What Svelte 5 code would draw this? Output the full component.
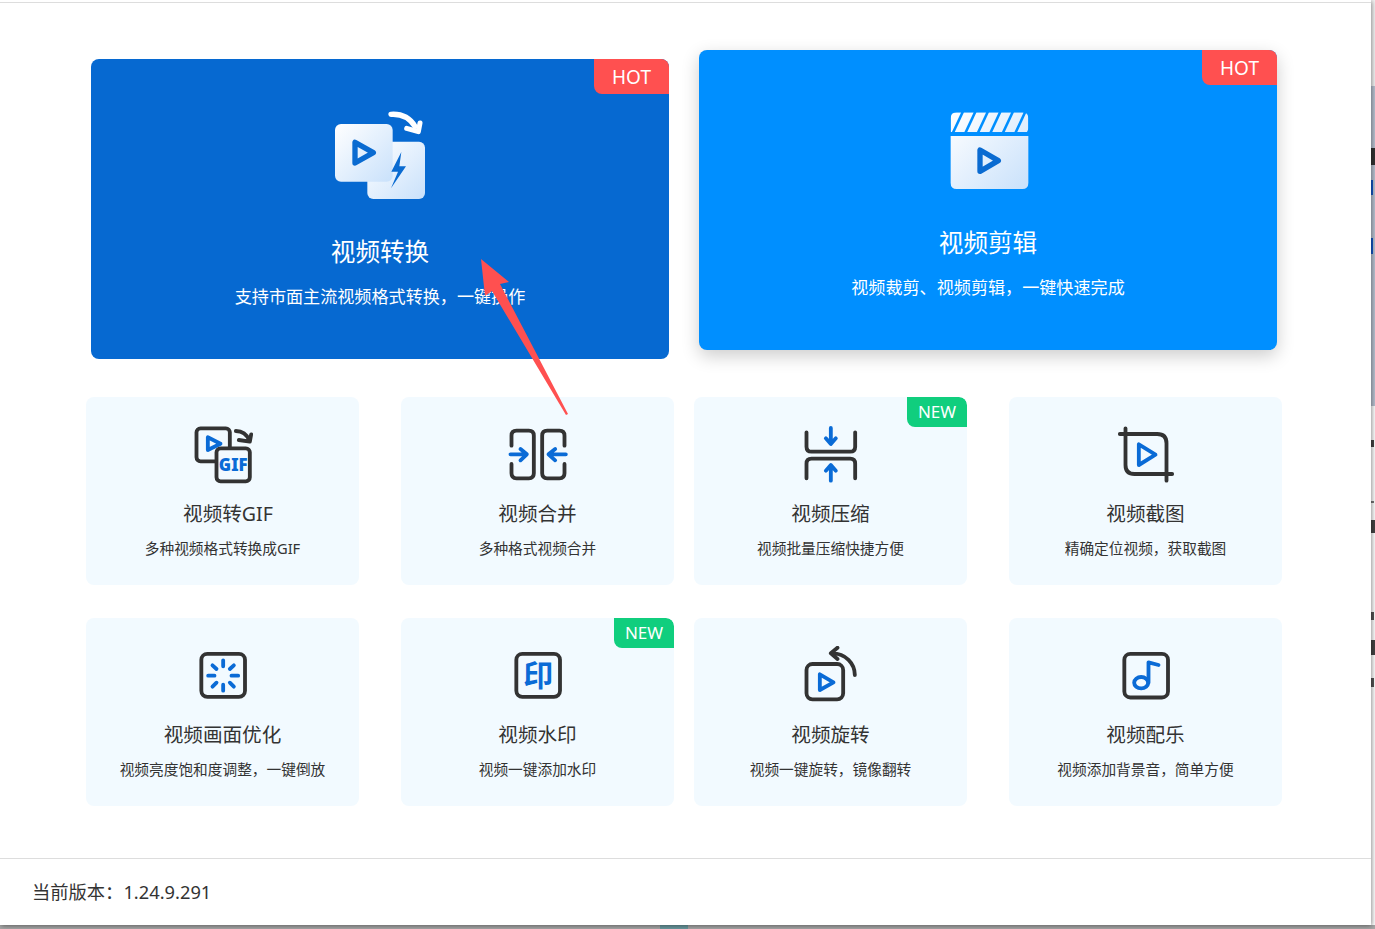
<script>
  const stripes = [-1, 0, 1, 2, 3, 4, 5].map((k) => {
    const a = 132 + 37.5 * k;
    return `${a},67 ${a + 29},67 ${a + 1},127 ${a - 28},127`;
  });

  const left = [
    { icon: 'gif', title: '视频转GIF', sub: '多种视频格式转换成GIF', shifted: true },
    { icon: 'merge', title: '视频合并', sub: '多种格式视频合并' },
    { icon: 'enhance', title: '视频画面优化', sub: '视频亮度饱和度调整，一键倒放' },
    { icon: 'mark', title: '视频水印', sub: '视频一键添加水印', tag: 'NEW' }
  ];
  const right = [
    { icon: 'compress', title: '视频压缩', sub: '视频批量压缩快捷方便', tag: 'NEW' },
    { icon: 'shot', title: '视频截图', sub: '精确定位视频，获取截图' },
    { icon: 'rotate', title: '视频旋转', sub: '视频一键旋转，镜像翻转' },
    { icon: 'music', title: '视频配乐', sub: '视频添加背景音，简单方便' }
  ];
  const boxes = {
    gif: '67.5 45 180 180',
    merge: '52.5 75 180 180',
    compress: '61.5 45 180 180',
    shot: '46.5 45 180 180',
    enhance: '37.5 33 180 180',
    mark: '37.5 33 180 180',
    rotate: '46.5 33 180 180',
    music: '46.5 33 180 180'
  };
  const marks = [
    { y: 148, h: 17, w: 4, color: '#333' },
    { y: 180, h: 15, w: 2, color: '#1657c9' },
    { y: 238, h: 16, w: 2, color: '#1657c9' },
    { y: 440, h: 7, w: 3, color: '#444' },
    { y: 501, h: 2, w: 3, color: '#777' },
    { y: 520, h: 13, w: 4, color: '#444' },
    { y: 612, h: 8, w: 3, color: '#555' },
    { y: 640, h: 15, w: 4, color: '#444' },
    { y: 678, h: 9, w: 3, color: '#555' }
  ];
</script>

{#snippet card(item)}
  <div class="card">
    {#if item.tag}<span class="tag">{item.tag}</span>{/if}
    <svg class="tool-icon" viewBox={boxes[item.icon]} aria-hidden="true">
      {#if item.icon === 'gif'}
        <rect class="ink" x="78" y="55" width="100" height="99" rx="12" />
        <path class="blue" d="M112 82v38l38-19z" />
        <rect class="ink" x="138" y="115" width="100" height="99" rx="12" fill="#f2faff" />
        <text class="gif" x="188" y="183" text-anchor="middle">GIF</text>
        <path class="ink" d="M196 63c18 0 33 10 40 28M242 73l-4 22-33-5" />
      {:else if item.icon === 'merge'}
        <path class="ink" d="M63 137v-30q0-15 15-15h37q15 0 15 15v113q0 15-15 15H78q-15 0-15-15v-28" />
        <path class="ink" d="M222 137v-30q0-15-15-15h-37q-15 0-15 15v113q0 15 15 15h37q15 0 15-15v-28" />
        <path class="blue" d="M60 163h48M90 147l19 16-19 18M226 163h-50M194 147l-20 16 20 18" />
      {:else if item.icon === 'compress'}
        <path class="ink" d="M78 67v43q0 15 15 15h116q15 0 15-15V67M78 205v-44q0-15 15-15h116q15 0 15 15v44" />
        <path class="blue" d="M151 54v46M136 85l15 17 15-17M151 212v-46M136 182l15-17 15 17" />
      {:else if item.icon === 'shot'}
        <path class="ink" d="M58 72h112q28 0 28 28v112M75 55v110q0 27 27 27h113" />
        <path class="blue" d="M115 103v62l50-31z" />
      {:else if item.icon === 'enhance'}
        <rect class="ink" x="62.5" y="56.5" width="131" height="129" rx="18" />
        <path class="blue" d="M128 76v18M128 149v18M83 122h19M153 122h20M96 91l12 11M160 91l-12 11M96 155l12-12M160 155l-12-12" />
      {:else if item.icon === 'mark'}
        <rect class="ink" x="62.5" y="56.5" width="131" height="129" rx="18" />
        <text class="seal" x="128" y="152" text-anchor="middle">印</text>
      {:else if item.icon === 'rotate'}
        <rect class="ink" x="63" y="87" width="110" height="106" rx="18" />
        <path class="blue" d="M103 118v47l41-23z" />
        <path class="ink" d="M208 120c0-35-28-65-68-65M156 38l-20 17 20 17" />
      {:else if item.icon === 'music'}
        <rect class="ink" x="71.5" y="56.5" width="131" height="131" rx="18" />
        <ellipse class="blue" cx="122" cy="143" rx="21" ry="17" />
        <path class="blue" d="M144 143V82l30 8" />
      {/if}
    </svg>
    <div class="card-title" class:shifted={item.shifted}>{item.title}</div>
    <div class="card-sub">{item.sub}</div>
  </div>
{/snippet}

<div class="page">
  <div class="window">
    <main class="main">
      <div class="columns">
        <section class="column">
          <div class="hero hero-a">
            <span class="hot">HOT</span>
            <svg class="hero-icon" viewBox="90 45 300 300" aria-hidden="true">
              <defs>
                <linearGradient id="tile" x1="0" y1="0" x2="1" y2="1">
                  <stop offset="0" stop-color="#ffffff" />
                  <stop offset="1" stop-color="#c9e1fb" />
                </linearGradient>
              </defs>
              <rect x="202" y="155" width="173" height="172" rx="18" fill="url(#tile)" />
              <rect x="105" y="102" width="173" height="173" rx="18" fill="url(#tile)" />
              <path d="M304 186l-30 59h20l-21 50 45-66h-20z" fill="#0a6bd1" />
              <path d="M165 157v62l55-31z" fill="none" stroke="#0a6bd1" stroke-width="16" stroke-linejoin="round" />
              <path d="M273 73c30-2 56 10 72 36" fill="none" stroke="#fff" stroke-width="16" stroke-linecap="round" />
              <path d="M360 99l-5 26-35-10" fill="none" stroke="#fff" stroke-width="15" stroke-linecap="round" stroke-linejoin="round" />
            </svg>
            <h2>视频转换</h2>
            <p>支持市面主流视频格式转换，一键操作</p>
          </div>
          <div class="cards">
            {#each left as item}{@render card(item)}{/each}
          </div>
        </section>
        <section class="column">
          <div class="hero hero-b">
            <span class="hot">HOT</span>
            <svg class="hero-icon" viewBox="54 18 300 300" aria-hidden="true">
              <defs>
                <linearGradient id="tile2" gradientUnits="userSpaceOnUse" x1="92" y1="67" x2="325" y2="297">
                  <stop offset="0" stop-color="#ffffff" />
                  <stop offset="1" stop-color="#c9e1fb" />
                </linearGradient>
                <clipPath id="band2"><path d="M92 127V85q0-18 18-18h197q18 0 18 18v42z" /></clipPath>
              </defs>
              <g clip-path="url(#band2)">
                {#each stripes as points}<polygon {points} fill="url(#tile2)" />{/each}
              </g>
              <path d="M92 138h233v141q0 18-18 18H110q-18 0-18-18z" fill="url(#tile2)" />
              <path d="M180 180v64l55-32z" fill="none" stroke="#0a6bd1" stroke-width="16" stroke-linejoin="round" />
            </svg>
            <h2>视频剪辑</h2>
            <p>视频裁剪、视频剪辑，一键快速完成</p>
          </div>
          <div class="cards">
            {#each right as item}{@render card(item)}{/each}
          </div>
        </section>
      </div>
      <footer class="footer">当前版本：1.24.9.291</footer>
      <svg class="annotation" viewBox="0 0 1371 925" aria-hidden="true">
        <polygon points="481,259 509,282 500,284 568,414 566,415 492,291 485,296" fill="#ff5050" />
      </svg>
    </main>
    <aside class="strip">
      {#each marks as m}
        <i style="top:{m.y}px;height:{m.h}px;width:{m.w}px;background:{m.color}"></i>
      {/each}
    </aside>
  </div>
  <div class="bottom"><i></i></div>
</div>

<style>
  :global(body) {
    margin: 0;
    background: #fff;
    overflow: hidden;
  }
  .page {
    width: 1375px;
    height: 929px;
    display: flex;
    flex-direction: column;
    font-family: "Noto Sans", "Noto Sans CJK SC", sans-serif;
    color: #333;
    overflow: hidden;
  }
  .window {
    display: flex;
    height: 925px;
  }
  .main {
    position: relative;
    width: 1371px;
    height: 925px;
    box-sizing: border-box;
    flex: none;
    display: flex;
    flex-direction: column;
    background: #fff;
    box-shadow: 1px 1px 5px rgba(0, 0, 0, 0.45);
    z-index: 1;
  }
  .main::before {
    content: "";
    display: block;
    height: 1px;
    margin-top: 2px;
    background: #ddd;
  }
  .columns {
    display: grid;
    grid-template-columns: 588px 588px;
    column-gap: 20px;
    padding: 56px 0 0 86px;
    flex: 1;
  }
  .column {
    display: flex;
    flex-direction: column;
    gap: 38px;
  }
  .hero {
    position: relative;
    height: 300px;
    margin: 0 5px;
    border-radius: 8px;
    color: #fff;
    display: flex;
    flex-direction: column;
    align-items: center;
    box-sizing: border-box;
    padding-top: 46px;
  }
  .hero-a {
    background: #0669d1;
  }
  .hero-b {
    background: #008fff;
    transform: translateY(-9px);
    box-shadow: 0 6px 18px rgba(0, 0, 0, 0.2);
  }
  .hot {
    position: absolute;
    top: 0;
    right: 0;
    width: 75px;
    height: 35px;
    line-height: 37px;
    text-align: center;
    font-size: 19px;
    background: #ff5050;
    border-radius: 0 8px 0 8px;
  }
  .hero-icon {
    width: 100px;
    height: 100px;
    display: block;
  }
  .hero h2 {
    margin: 29px 0 0;
    font-size: 24.6px;
    font-weight: 400;
    line-height: 36px;
  }
  .hero p {
    margin: 15px 0 0;
    font-size: 17.1px;
    line-height: 24px;
  }
  .cards {
    display: grid;
    grid-template-columns: 273px 273px;
    grid-auto-rows: 188px;
    column-gap: 42px;
    row-gap: 33px;
  }
  .card {
    position: relative;
    background: #f2faff;
    border-radius: 8px;
    display: flex;
    flex-direction: column;
    align-items: center;
    padding-top: 28px;
    box-sizing: border-box;
    overflow: hidden;
  }
  .tag {
    position: absolute;
    top: 0;
    right: 0;
    width: 60px;
    height: 30px;
    line-height: 30px;
    text-align: center;
    font-size: 17px;
    color: #fff;
    background: #10ce7e;
    border-radius: 0 8px 0 8px;
  }
  .tool-icon {
    width: 60px;
    height: 60px;
    display: block;
    flex: none;
  }
  .ink {
    fill: none;
    stroke: #333;
    stroke-width: 11.5;
    stroke-linecap: round;
    stroke-linejoin: round;
  }
  rect.ink[fill] {
    fill: #f2faff;
  }
  .blue {
    fill: none;
    stroke: #0a6bd6;
    stroke-width: 11.5;
    stroke-linecap: round;
    stroke-linejoin: round;
  }
  .gif {
    font-family: "Noto Sans", sans-serif;
    font-size: 50px;
    font-weight: 900;
    fill: #0a6bd6;
  }
  .seal {
    font-family: "Noto Sans CJK SC", sans-serif;
    font-size: 90px;
    font-weight: 700;
    fill: #0a6bd6;
  }
  .card-title {
    margin-top: 14px;
    font-size: 19.6px;
    line-height: 30px;
  }
  .card-title.shifted {
    padding-left: 11px;
  }
  .card-sub {
    margin-top: 9px;
    font-size: 14.7px;
    line-height: 21px;
  }
  .footer {
    border-top: 1px solid #ddd;
    height: 66px;
    padding-left: 32px;
    line-height: 66px;
    font-size: 18.3px;
    flex: none;
  }
  .annotation {
    position: absolute;
    inset: 0;
    width: 100%;
    height: 100%;
    pointer-events: none;
  }
  .strip {
    position: relative;
    width: 4px;
    height: 925px;
    flex: none;
    overflow: hidden;
    background: linear-gradient(#f4f4f4 0 86px, #b9c2d1 86px 406px, #fff 406px);
  }
  .strip i {
    position: absolute;
    left: 0;
    display: block;
  }
  .bottom {
    position: relative;
    height: 4px;
    background: #a8a8a8;
    flex: none;
  }
  .bottom i {
    position: absolute;
    left: 660px;
    width: 28px;
    top: 0;
    height: 4px;
    background: #6b9aa0;
  }
</style>
